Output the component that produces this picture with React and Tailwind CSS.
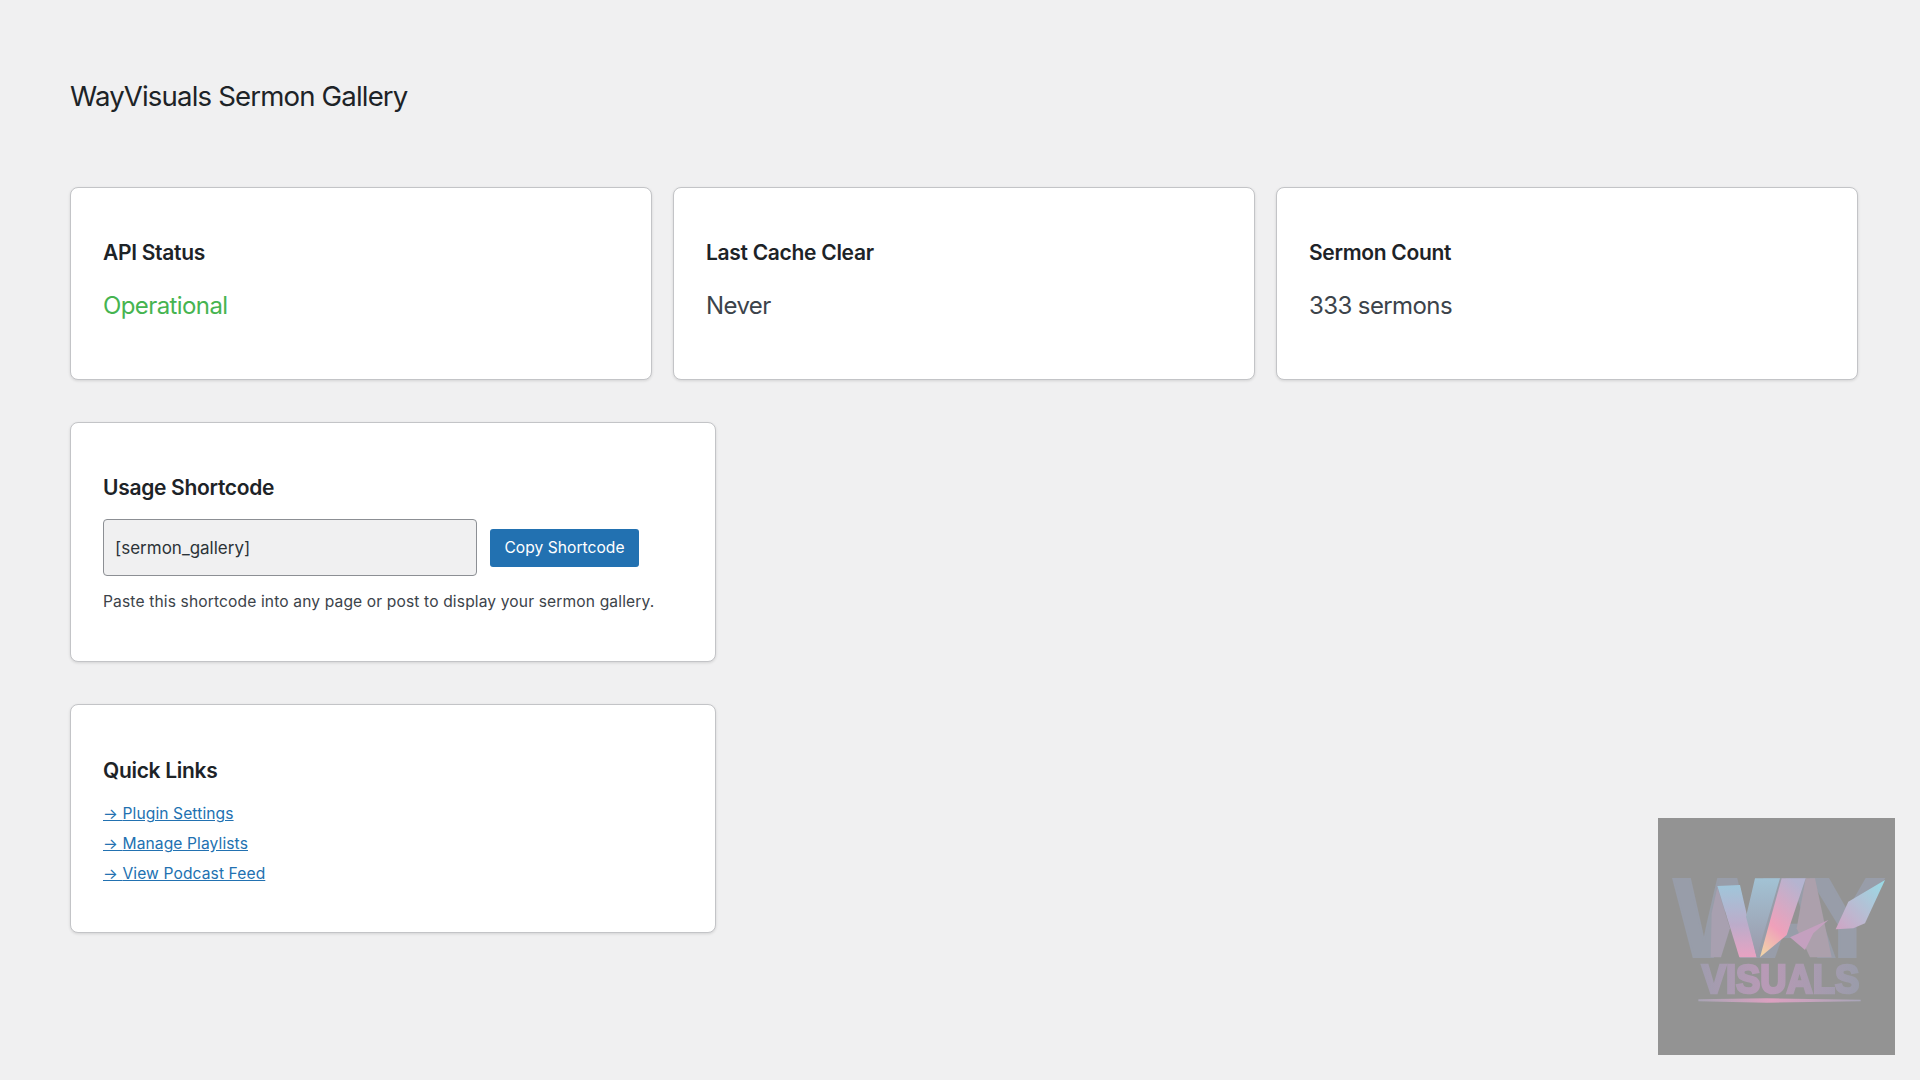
import React from "react";

function Logo() {
  return (
    <div className="absolute right-[25px] bottom-[25px] w-[237px] h-[237px] bg-[#939393]">
      <svg viewBox="54 54 711 711" className="w-full h-full block">
        <defs>
          <linearGradient id="g1" x1="0" y1="0" x2="0" y2="1">
            <stop offset="0" stopColor="#a0c6da" />
            <stop offset="0.55" stopColor="#bcaccA" />
            <stop offset="1" stopColor="#e8a2c2" />
          </linearGradient>
          <linearGradient id="g2" x1="0" y1="0" x2="0" y2="1">
            <stop offset="0" stopColor="#a2c2d4" />
            <stop offset="1" stopColor="#9c98a8" />
          </linearGradient>
          <linearGradient id="g3" x1="0.7" y1="0" x2="0.2" y2="1">
            <stop offset="0" stopColor="#b4b4d0" />
            <stop offset="0.65" stopColor="#f0a0ba" />
            <stop offset="1" stopColor="#f0d0a8" />
          </linearGradient>
          <linearGradient id="g4" x1="0" y1="1" x2="1" y2="0">
            <stop offset="0" stopColor="#d0a4c4" />
            <stop offset="1" stopColor="#98dce6" />
          </linearGradient>
          <linearGradient id="g5" x1="0" y1="0" x2="1" y2="0">
            <stop offset="0" stopColor="#a09cae" />
            <stop offset="0.4" stopColor="#b89ab6" />
            <stop offset="1" stopColor="#9a9caa" />
          </linearGradient>
          <linearGradient id="g6" x1="0" y1="0" x2="1" y2="0">
            <stop offset="0" stopColor="#a8a4b4" />
            <stop offset="0.45" stopColor="#dca0c0" />
            <stop offset="1" stopColor="#a8a6b8" />
          </linearGradient>
          <filter id="soft"><feGaussianBlur stdDeviation="1.4" /></filter>
        </defs>
        <g filter="url(#soft)">
          <text x="100 345 508" y="472" fontFamily="Liberation Sans" fontWeight="700" fontSize="342" fill="#989da9" stroke="#989da9" strokeWidth="6">WAY</text>
          <polygon points="215,340 232,262 270,385 243,472 212,472" fill="#a8a0b0" />
          <polygon points="232,258 300,255 350,472 298,472" fill="url(#g1)" />
          <polygon points="345,235 420,235 365,420 350,472 318,350" fill="url(#g2)" />
          <polygon points="497,235 525,235 575,472 510,472 470,385" fill="#aca0ac" />
          <polygon points="425,235 497,235 440,405 360,472" fill="url(#g3)" />
          <polygon points="565,360 450,412 495,450 520,400" fill="#c4a0bf" />
          <polygon points="735,240 625,305 587,388 640,385 675,370" fill="url(#g4)" />
          <text x="185" y="578" fontFamily="Liberation Sans" fontWeight="700" fontSize="122" textLength="473" lengthAdjust="spacingAndGlyphs" fill="url(#g5)" stroke="url(#g5)" strokeWidth="8">VISUALS</text>
          <polygon points="175,598 380,595 662,599 662,604 380,608 175,604" fill="url(#g6)" />
        </g>
      </svg>
    </div>
  );
}

function Card({ title, value, valueClass }) {
  return (
    <div className="bg-white border border-[#c3c4c7] rounded-[8px] shadow-[0_1px_3px_rgba(0,0,0,0.12)] pl-[32px] pr-[32px] pt-[50px] pb-[56px]">
      <h2 className="text-[21px] leading-[30px] font-semibold tracking-[-0.3px] text-[#1d2327]">{title}</h2>
      <p className={`mt-[21px] text-[24px] leading-[34px] tracking-[-0.6px] ${valueClass}`}>{value}</p>
    </div>
  );
}

export default function App() {
  const links = ["Plugin Settings", "Manage Playlists", "View Podcast Feed"];
  return (
    <div className="relative h-[1080px] overflow-hidden bg-[#f0f0f1] pl-[70px] pr-[62px] pt-[78px] font-['Inter','Liberation_Sans',sans-serif]">
      <h1 className="text-[27.6px] leading-[36px] font-normal tracking-[-0.85px] text-[#1d2327] mb-[73px]">WayVisuals Sermon Gallery</h1>
      <div className="grid grid-cols-3 gap-[21px]">
        <Card title="API Status" value="Operational" valueClass="text-[#46b450]" />
        <Card title="Last Cache Clear" value="Never" valueClass="text-[#3c434a]" />
        <Card title="Sermon Count" value="333 sermons" valueClass="text-[#3c434a]" />
      </div>
      <div className="mt-[42px] w-[646px] bg-white border border-[#c3c4c7] rounded-[8px] shadow-[0_1px_3px_rgba(0,0,0,0.12)] pl-[32px] pr-[32px] pt-[50px] pb-[47px]">
        <h2 className="text-[21px] leading-[30px] font-semibold tracking-[-0.3px] text-[#1d2327]">Usage Shortcode</h2>
        <div className="mt-[16px] flex items-center gap-[13px]">
          <input
            readOnly
            value="[sermon_gallery]"
            className="w-[374px] h-[57px] px-[11px] bg-[#f0f0f1] border border-[#8c8f94] rounded-[4px] text-[17px] text-[#2c3338] outline-none"
          />
          <button className="w-[149px] h-[38px] bg-[#2271b1] rounded-[3px] text-white text-[15.6px] tracking-[0.03px]">Copy Shortcode</button>
        </div>
        <p className="mt-[14px] text-[15.6px] leading-[24px] tracking-[0.13px] text-[#3c434a]">Paste this shortcode into any page or post to display your sermon gallery.</p>
      </div>
      <div className="mt-[42px] w-[646px] bg-white border border-[#c3c4c7] rounded-[8px] shadow-[0_1px_3px_rgba(0,0,0,0.12)] pl-[32px] pr-[32px] pt-[51px] pb-[43px]">
        <h2 className="text-[21px] leading-[30px] font-semibold tracking-[-0.3px] text-[#1d2327]">Quick Links</h2>
        <ul className="mt-[13px]">
          {links.map((l) => (
            <li key={l} className="h-[30px] leading-[30px] text-[15.6px] tracking-[0.1px]">
              <a href="#" className="text-[#2271b1] underline">→ {l}</a>
            </li>
          ))}
        </ul>
      </div>
      <Logo />
    </div>
  );
}
